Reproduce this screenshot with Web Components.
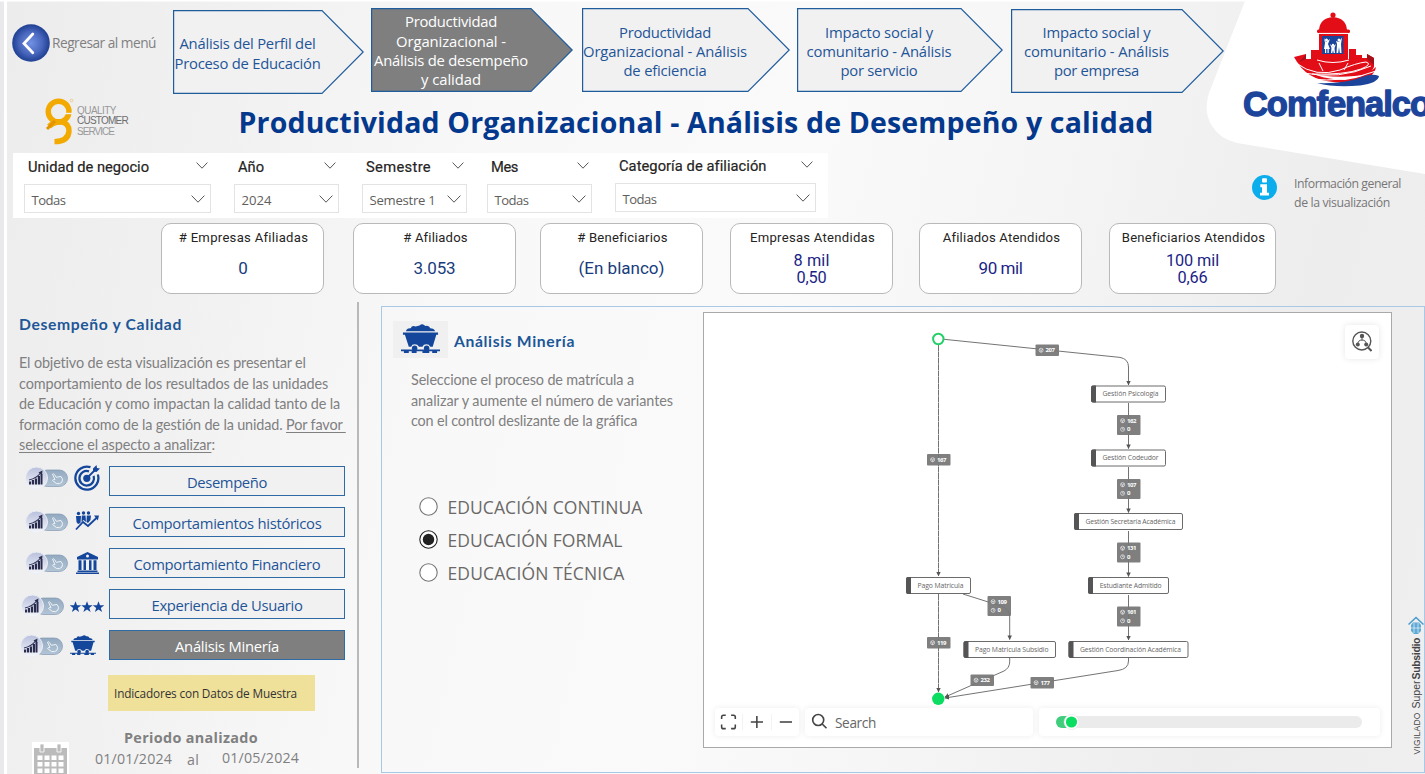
<!DOCTYPE html>
<html lang="es">
<head>
<meta charset="utf-8">
<title>Productividad Organizacional</title>
<style>
html,body{margin:0;padding:0}
body{width:1425px;height:774px;overflow:hidden;font-family:"Open Sans","Noto Sans",sans-serif;color:#777}
</style>
</head>
<body>
<dash-page></dash-page>
<script>
const make = (name, render) => customElements.define(name, class extends HTMLElement {
  connectedCallback() {
    if (this.shadowRoot) return;
    const t = document.createElement('template');
    t.innerHTML = render(k => this.getAttribute(k) || '');
    this.attachShadow({mode: 'open'}).append(t.content.cloneNode(true));
  }
});

const chevron = (w, h) => `<svg width="${w}" height="${h}" viewBox="0 0 ${w} ${h}"><path d="M.6 .6 L${w/2} ${h-.8} L${w-.6} .6" fill="none" stroke="#555" stroke-width="1"/></svg>`;

/* Page frame and backdrop */
make('dash-page', () => `
<style>
:host{display:block;position:relative;width:1425px;height:774px;overflow:hidden;
 background:linear-gradient(103deg,#ececed 0,#f1f1f2 16%,#f8f8f9 32%,#fafafa 52%,#f5f5f5 68%,#ededee 86%,#efeff0 100%)}
.bg{position:absolute;inset:0}
main{position:relative;display:flex;flex-direction:column;height:774px}
.top{display:grid;grid-template-columns:1240px 185px;height:219px}
nav{display:flex;align-items:flex-start;height:96px;padding-left:12px;box-sizing:border-box}
.brand{display:flex;height:57px;padding-left:44px}
h1{margin:6px 0 0 109.500px;font:700 28.500px/40px "Open Sans";color:#04388c}
.kpis{display:flex;height:83px;padding:4px 0 0 161px;box-sizing:border-box}
.body{display:flex;flex:1}
</style>
<svg class="bg" width="1425" height="774">
 <path d="M0 0H4V774H0Z" fill="#e9e9eb"/><path d="M4 0H7V774H4Z" fill="#fff"/><path d="M0 0H1425V1.5H0Z" fill="#fff"/>
 <path d="M1245 1 L1209 93 Q1203 112 1212 126 Q1220 139 1237 143 L1425 174 V0Z" fill="#fff"/>
</svg>
<main>
 <div class="top">
  <div>
   <nav>
    <back-link></back-link>
    <nav-arrow w="191" h="84" top="10" left="1" pad="3"><fit-text w="136">Análisis del Perfil del</fit-text><fit-text w="146">Proceso de Educación</fit-text></nav-arrow>
    <nav-arrow w="202" h="84" top="8" left="7" fill="#7f7f7f" color="#fff" pad="2"><fit-text w="92">Productividad</fit-text><fit-text w="110">Organizacional -</fit-text><fit-text w="154">Análisis de desempeño</fit-text><fit-text w="60">y calidad</fit-text></nav-arrow>
    <nav-arrow w="208" h="84" top="8" left="9" pad="3"><fit-text w="92">Productividad</fit-text><fit-text w="164">Organizacional - Análisis</fit-text><fit-text w="83">de eficiencia</fit-text></nav-arrow>
    <nav-arrow w="206" h="84" top="8" left="7" pad="3"><fit-text w="108">Impacto social y</fit-text><fit-text w="145">comunitario - Análisis</fit-text><fit-text w="77">por servicio</fit-text></nav-arrow>
    <nav-arrow w="213" h="84" top="9" left="8" pad="1"><fit-text w="108">Impacto social y</fit-text><fit-text w="145">comunitario - Análisis</fit-text><fit-text w="85">por empresa</fit-text></nav-arrow>
   </nav>
   <div class="brand"><quality-logo></quality-logo><h1><fit-text w="915">Productividad Organizacional - Análisis de Desempeño y calidad</fit-text></h1></div>
   <slicer-bar></slicer-bar>
  </div>
  <brand-corner></brand-corner>
 </div>
 <div class="kpis">
  <kpi-card name="# Empresas Afiliadas" nw="129" value="0" vw="8.5" w="163" ></kpi-card>
  <kpi-card name="# Afiliados" nw="64" value="3.053" vw="42" w="163" gap="29"></kpi-card>
  <kpi-card name="# Beneficiarios" nw="90" value="(En blanco)" vw="86" w="163" gap="24"></kpi-card>
  <kpi-card name="Empresas Atendidas" nw="125" value="8 mil" vw="36" second="0,50" sw="30" w="163" gap="27"></kpi-card>
  <kpi-card name="Afiliados Atendidos" nw="117" value="90 mil" vw="44" w="163" gap="26" tone="#1c1f85"></kpi-card>
  <kpi-card name="Beneficiarios Atendidos" nw="143" value="100 mil" vw="53" second="0,66" sw="30" w="167" gap="27"></kpi-card>
 </div>
 <div class="body"><side-menu></side-menu><mining-panel></mining-panel></div>
</main>`);

make('back-link', () => `
<style>:host{display:flex;align-items:center;width:160px;height:38px;margin-top:24px;font:13.700px/20px "Open Sans";color:#808080}fit-text{margin-left:2px}svg{flex:none}</style>
<svg width="38" height="38"><defs><radialGradient id="g"><stop offset="0" stop-color="#7191e4"/><stop offset=".6" stop-color="#4867bd"/><stop offset="1" stop-color="#1f3f92"/></radialGradient></defs>
<circle cx="19" cy="19" r="18.8" fill="url(#g)"/><path d="M20.8 10 L12 19.5 L20.8 28.8" fill="none" stroke="#fff" stroke-width="2.8" stroke-linecap="round"/></svg>
<fit-text w="104">Regresar al menú</fit-text>`);

make('nav-arrow', a => {
  const w = +a('w'), h = +a('h');
  return `<style>
:host{display:grid;flex:none;width:${w}px;height:${h}px;margin:${a('top')}px 0 0 ${a('left')}px;color:${a('color') || '#1f5597'};font:14.800px/19.3px "Open Sans"}
svg,div{grid-area:1/1}
div{display:flex;flex-direction:column;justify-content:center;align-items:center;padding:${a('pad')}px 42px 0 0;position:relative}
</style>
<svg width="${w}" height="${h}"><path d="M.6 .6H${w-42}L${w-.8} ${h/2}L${w-42} ${h-.6}H.6Z" fill="${a('fill') || '#f1f1f2'}" stroke="#1f5c9c" stroke-width="1.2"/></svg>
<div><slot></slot></div>`;
});

make('quality-logo', () => `
<style>:host{display:flex;width:85px;height:50px;padding-top:1px;color:#999;font:300 10px/10.300px "Liberation Sans"}
div{padding:9px 0 0 2px}b{display:block;font-weight:400;color:#6d6d6d}svg{flex:none}</style>
<svg width="31" height="50"><g fill="none" stroke="#f2a900" stroke-width="5.4"><circle cx="14.6" cy="14.6" r="10.4"/><path d="M5 29.5 Q10 24.8 17 24.8 Q25 26 25 34 Q24.5 44.3 10.5 44.6"/></g><path d="M3 32 L11 24" stroke="#e39200" stroke-width="3"/><path d="M18 16.5 H29" stroke="#f1f1f2" stroke-width="1.4"/><circle cx="27.5" cy="3.5" r="1.4" fill="none" stroke="#e9b95c" stroke-width=".6"/></svg>
<div><fit-text w="39">QUALITY</fit-text><b><fit-text w="51">CUSTOMER</fit-text></b><fit-text w="37">SERVICE</fit-text></div>`);

make('slicer-bar', () => `
<style>:host{display:flex;width:815px;height:65px;margin-left:13px;padding-left:11px;box-sizing:border-box;background:#fff}
slicer-box{flex:none}</style>
<slicer-box label="Unidad de negocio" lw="121" value="Todas" vw="34" w="187"></slicer-box>
<slicer-box label="Año" lw="26" value="2024" vw="30" w="105" gap="23"></slicer-box>
<slicer-box label="Semestre" lw="65" value="Semestre 1" vw="66" w="105" gap="23"></slicer-box>
<slicer-box label="Mes" lw="27" value="Todas" vw="34" w="105" gap="20"></slicer-box>
<slicer-box label="Categoría de afiliación" lw="147" value="Todas" vw="34" w="201" gap="23" up="1"></slicer-box>`);

make('slicer-box', a => `
<style>:host{display:block;width:${a('w')}px;margin-left:${a('gap') || 0}px;margin-top:${a('up') ? -1 : 0}px}
.t{display:flex;justify-content:space-between;align-items:center;height:31px;padding:0 3px 0 4px;font:400 14.700px/20px Roboto;color:#252423}
.t fit-text{margin-top:-4px;-webkit-text-stroke:.2px #252423}.t svg{margin-top:-6px}
.b{display:flex;justify-content:space-between;align-items:center;height:29px;padding:0 5px 0 6.500px;box-sizing:border-box;border:1px solid #e3e3e3;font:13.100px/20px "Open Sans";color:#605e5c}
.b fit-text{margin-top:2px}
</style>
<div class="t"><fit-text w="${a('lw')}">${a('label')}</fit-text>${chevron(12, 7)}</div>
<div class="b"><fit-text w="${a('vw')}">${a('value')}</fit-text>${chevron(14, 8)}</div>`);

make('brand-corner', () => `
<style>:host{display:flex;flex-direction:column;overflow:hidden}
.l{display:block;margin:10px 0 0 2px}
.i{display:flex;margin:52px 0 0 12px;font:12.3px/19px "Open Sans";color:#777}
.i svg{margin-top:1px;flex:none}.i div{margin:-.500px 0 0 17px}</style>
<svg class="l" width="183" height="112" viewBox="1242 10 183 112">
 <g fill="#e30d18">
  <circle cx="1333" cy="15" r="2.6"/><path d="M1319 30 Q1320 18 1333 17 Q1346 18 1347 30Z"/><rect x="1317" y="29.5" width="33" height="3.4" rx="1.5"/>
  <path d="M1319 33.5H1348V62H1319Z"/>
  <path d="M1294 57 L1306 54 V59 H1311 V50 H1320 V62 L1349 59 V49 H1356 V55 H1362 V58 H1367 V54 L1374 58 V67 L1370 74 Q1335 80 1310 73 Q1299 67 1294 57Z"/>
  <path d="M1298 63 Q1312 79 1345 80 Q1365 78 1376 67 Q1374 79 1355 82 Q1312 86 1298 63Z"/>
 </g>
 <path d="M1306 54V59L1299 62L1303 58Z M1367 54V59L1374 65V58Z" fill="#a3121b"/>
 <g fill="none" stroke="#fff" stroke-width="1"><path d="M1319 33.4H1348"/><path d="M1317 60 Q1333 65 1349 60"/><path d="M1319 63 L1323 71 M1348 63 L1344 70"/><path d="M1296 63 Q1316 78 1340 70 Q1356 63 1366 62 Q1373 64 1361 69 Q1345 75 1312 74"/><path d="M1303 73 Q1340 80 1371 66"/><path d="M1309 79 Q1345 83 1376 71"/></g>
 <path d="M1317 83 Q1345 84 1362 77 Q1372 73 1379 76 Q1378 83 1360 85.5 Q1335 88 1317 83Z" fill="#1c449b"/>
 <rect x="1322" y="36" width="21.5" height="18" fill="#1c449b"/>
 <g fill="#fff"><circle cx="1326.5" cy="40" r="1.5"/><path d="M1324 38 L1326 42 L1330 39 L1328 44 L1330 49 H1324 L1325 43Z"/><path d="M1325 48h1.2v5h-1.2zM1327.5 48h1.2v5h-1.2z"/><circle cx="1333" cy="45" r="1.2"/><path d="M1330 44 L1333 46.5 L1336 44 L1334.5 48 L1335 53 H1333.7 L1333 50 L1332.3 53 H1331 L1331.5 48Z"/><circle cx="1339" cy="40" r="1.5"/><path d="M1336 41 L1339 42 L1342 37.5 L1341 44 L1341.5 53 H1339.8 L1339 47 L1338.2 53 H1336.5 L1337 44Z"/></g>
 <text x="1243" y="116" font-family="Liberation Sans" font-weight="700" font-size="34.500" fill="#1c449b" stroke="#1c449b" stroke-width="1.300" stroke-linejoin="round" textLength="188" lengthAdjust="spacing">Comfenalco</text>
</svg>
<div class="i"><svg width="25" height="25"><circle cx="12.500" cy="12.500" r="12.500" fill="#0cadec"/><rect x="10" y="3.300" width="5" height="4.200" rx="1" fill="#fff"/><path d="M8.300 9.300H15V17.700H17V20.600H8V17.700H10V12.200H8.300Z" fill="#fff"/></svg>
<div><fit-text w="107">Información general</fit-text><fit-text w="96">de la visualización</fit-text></div></div>`);

make('kpi-card', a => `
<style>:host{display:flex;flex:none;flex-direction:column;align-items:center;width:${a('w')}px;height:71px;box-sizing:border-box;margin-left:${a('gap') || 0}px;border:1px solid #b9b9b9;border-radius:10px;background:#fff;padding-top:4px;font:400 13.100px/20px Roboto;color:#252423}
.n{margin-left:2px}
.v{display:flex;flex-direction:column;align-items:center;justify-content:center;height:${a('second') ? 36 : 41}px;margin-top:${a('second') ? 3 : 0}px;font:400 ${a('second') ? 16.3 : 17}px/17px Roboto;color:${a('second') ? '#1c1f85' : a('tone') || '#173c7c'}}</style>
<fit-text class="n" w="${a('nw')}">${a('name')}</fit-text>
<div class="v"><fit-text w="${a('vw')}">${a('value')}</fit-text>${a('second') ? `<fit-text w="${a('sw')}">${a('second')}</fit-text>` : ''}</div>`);

const cart = (w, h) => `<svg width="${w}" height="${h}" viewBox="0 0 40 30" preserveAspectRatio="none"><g fill="#14479b"><path d="M5 7.500 Q6 4 10 4.500 Q11 1 15 2.500 L19 1.500 Q22 -1 25 2 Q29 1 30 4.500 Q34 4.500 35 7.500Z"/><path d="M2 8.700H38V11H36.200L32.500 23.500H30 Q29 21 26 21 Q23 21 22 23.500H18.500 Q17 21 14 21 Q11 21 10.500 23.500H8L4 11H2Z"/><circle cx="14" cy="25" r="2.800"/><circle cx="26.300" cy="25" r="2.800"/><path d="M0 26.500H40V28.300H0ZM3 28H8V30H3ZM11 28H16V30H11ZM22 28H29V30H22ZM32 28H37V30H32Z"/></g></svg>`;
const icons = {
 target: `<svg width="26" height="26" viewBox="0 0 26 26"><g fill="none" stroke="#14479b" stroke-width="2.300"><path d="M16.500 2.200A11.500 11.500 0 1 0 23.800 9.500"/><path d="M15 6.300A7.300 7.300 0 1 0 19.600 10.800"/></g><circle cx="12.800" cy="13.300" r="3.600" fill="#14479b"/><path d="M13 13 L22 4" stroke="#14479b" stroke-width="1.800"/><path d="M19 6.500 V3.500 L22.500 0 L23 3 L26 3.500 L22.500 7Z" fill="#14479b"/></svg>`,
 people: `<svg width="24" height="20" viewBox="0 0 24 20"><g fill="#14479b"><circle cx="3.500" cy="2.500" r="1.700"/><circle cx="8.500" cy="2" r="1.700"/><circle cx="13.500" cy="2" r="1.700"/><path d="M1 5H6L5.500 12L3 13L1.500 11ZM6.800 4.500H10.500L11 11L8.500 9L6.500 11ZM11.800 4.500H16L15.500 9L13 12L11.500 11Z"/><path d="M19 4.500L24 4.500L22.800 9.500Z"/></g><path d="M1 18.500L8 11L13 15L22 6.500" fill="none" stroke="#14479b" stroke-width="1.800"/></svg>`,
 bank: `<svg width="23" height="22" viewBox="0 0 23 22"><path fill="#14479b" fill-rule="evenodd" d="M11.500 0L22 5V7.500H1V5ZM11.500 2.500A1.500 1.500 0 1 0 11.500 5.500A1.500 1.500 0 1 0 11.500 2.500ZM2.500 8.300H5.500V18H2.500ZM7.500 8.300H10V18H7.500ZM13 8.300H15.500V18H13ZM17.500 8.300H20.500V18H17.500ZM1.500 18.500H21.500V20H1.500ZM0 20.500H23V22H0Z"/></svg>`,
 stars: `<svg width="34" height="12" viewBox="0 0 34 12"><g fill="#14479b">${[5.5,17,28.500].map(x=>`<path transform="translate(${x} 6.200)" d="M0-6L1.500-1.900L5.700-1.900L2.300.7L3.600 4.800L0 2.300L-3.600 4.800L-2.300.7L-5.700-1.900L-1.500-1.900Z"/>`).join('')}</g></svg>`,
 cart: cart(26, 20)
};

make('toggle-badge', () => `
<style>:host{display:block;width:44px;height:24px}</style>
<svg width="44" height="24" viewBox="0 0 44 24"><defs><linearGradient id="p" x1="0" y1="0" x2="0" y2="1"><stop offset="0" stop-color="#92a9c0"/><stop offset="1" stop-color="#b3c5d6"/></linearGradient><linearGradient id="c" x1="0" y1="0" x2="0" y2="1"><stop offset="0" stop-color="#b8c0dc"/><stop offset="1" stop-color="#f6f7fb"/></linearGradient></defs>
<rect x="14" y="4" width="28.500" height="16.500" rx="8.200" fill="url(#p)" stroke="#8298b2" stroke-width=".7"/>
<circle cx="11.500" cy="12" r="11" fill="url(#c)" stroke="#eceef5" stroke-width="1"/>
<path d="M4 15.500h2v3H4zM6.800 14h2.200v4.500H6.800zM9.800 12.500H12v6H9.800zM12.800 10H15v8.500h-2.200zM15.500 8h2v10.500h-2z" fill="#292c4c"/><path d="M4 14Q12 12 15.500 7" fill="none" stroke="#33375b" stroke-width="1.100"/><path d="M13.500 6.500L17.500 4.500L17 9Z" fill="#292c4c"/>
<path d="M27.500 8.200Q28.500 7.200 29.500 8.500L31.200 11.300L36 10.500Q38.500 13 37 16Q35 18.500 31.500 17.500L27.500 14.500Q28 13 30 13.700Z" fill="none" stroke="#eef3f8" stroke-width="1"/></svg>`);

make('menu-row', a => `
<style>:host{display:grid;grid-template-columns:94px 236px;height:30px}
.i{display:grid;grid-template-columns:50px 36px;align-items:center;transform:translateY(${a('dy') || 0}px)}
toggle-badge{margin-left:${a('dx') || 0}px}
.i svg{display:block;margin:0 auto;transform:translate(${a('ix') || 0}px,${a('iy') || 0}px)}
button{all:unset;display:flex;justify-content:center;align-items:center;height:30px;box-sizing:border-box;padding-top:3px;border:1.500px solid #2d6aa6;background:${a('on') ? '#7f7f7f' : '#f1f1f2'};color:${a('on') ? '#fff' : '#1f5597'};font:14.800px/20px "Open Sans"}</style>
<div class="i"><toggle-badge></toggle-badge>${icons[a('icon')]}</div>
<button><fit-text w="${a('tw')}">${a('label')}</fit-text></button>`);

make('side-menu', () => `
<style>:host{display:flex;flex-direction:column;width:356.500px;height:466px;border-right:2.500px solid #b9b9b9;box-sizing:content-box}
h2{margin:10px 0 0 19px;font:700 15.700px/24px Lato;color:#1c5797}
p{margin:17px 0 0 19px;font:14.400px/20.500px Lato;color:#808080}
p u{text-decoration-thickness:1px;text-underline-offset:2px}
.m{display:grid;gap:11px;margin:10px 0 0 15px}
.y{margin:15px 0 0 108px;width:207px;height:37px;box-sizing:border-box;padding:8px 6px;background:#efe09a;font:11.800px/20px "Open Sans";color:#333}
.d{display:flex;margin:16px 0 0 32px;height:45px}
.cal{margin-top:15px;width:37px;height:32px;background:#fff;flex:none}
.t{margin-left:26px;font:14.200px/20px "Open Sans";color:#808080}
.t b{display:block;margin-left:29px;font:700 14.400px/22px "Open Sans"}
.t div{display:flex;align-items:flex-start}</style>
<h2><fit-text w="163">Desempeño y Calidad</fit-text></h2>
<p><fit-text w="287">El objetivo de esta visualización es presentar el</fit-text><fit-text w="309">comportamiento de los resultados de las unidades</fit-text><fit-text w="321">de Educación y como impactan la calidad tanto de la</fit-text><fit-text w="327">formación como de la gestión de la unidad. <u>Por favor&nbsp;</u></fit-text><fit-text w="196"><u>seleccione el aspecto a analizar</u>:</fit-text></p>
<div class="m">
 <menu-row icon="target" label="Desempeño" tw="80" dy="-3" dx="10" ix="4"></menu-row>
 <menu-row icon="people" label="Comportamientos históricos" tw="189" dx="10" ix="4" iy="-1"></menu-row>
 <menu-row icon="bank" label="Comportamiento Financiero" tw="187" dx="10" ix="4"></menu-row>
 <menu-row icon="stars" label="Experiencia de Usuario" tw="151" dy="2" dx="6" ix="4" iy="1"></menu-row>
 <menu-row icon="cart" label="Análisis Minería" tw="104" dy="1" dx="5" iy="-1" on="1"></menu-row>
</div>
<div class="y"><fit-text w="183">Indicadores con Datos de Muestra</fit-text></div>
<div class="d"><svg class="cal" width="37" height="32"><path d="M2 6H35V34H2Z" fill="#bbb"/><path d="M8 2h4v8H8zM25 2h4v8h-4z" fill="#bbb" stroke="#fff" stroke-width=".8"/><g fill="#fff">${[0,1,2].map(r=>[0,1,2,3].map(c=>`<rect x="${5.500+c*7}" y="${13.500+r*6.500}" width="5" height="4.500"/>`).join('')).join('')}</g></svg>
<div class="t"><b><fit-text w="134">Periodo analizado</fit-text></b><div><fit-text w="77">01/01/2024</fit-text><fit-text w="12" style="margin:1px 0 0 15px">al</fit-text><fit-text w="77" style="margin:-.500px 0 0 23px">01/05/2024</fit-text></div></div></div>`);

make('radio-item', a => `
<style>:host{display:flex;align-items:center;height:33px;font:17.500px/24px "Open Sans";color:#6b6967}svg{flex:none;margin-right:9.500px}</style>
<svg width="19" height="19"><circle cx="9.500" cy="9.500" r="8.700" fill="#fff" stroke="${a('on') ? '#222' : '#777'}" stroke-width="1.100"/>${a('on') ? '<circle cx="9.500" cy="9.500" r="5.700" fill="#222"/>' : ''}</svg><fit-text w="${a('tw')}">${a('label')}</fit-text>`);

make('mining-panel', () => `
<style>:host{display:flex;margin:3.500px 0 0 22px;width:1044px;height:467px;box-sizing:border-box;border:1.500px solid #a8c9e6;flex:none}
.l{width:320.500px;flex:none;padding-left:1px}
.h{display:flex;align-items:center;margin:14px 0 0 10.500px;height:37px}
.c{display:grid;place-items:center;width:55px;height:37px;background:#f0f0f1}
.c svg{margin-top:-2px}
h2{margin:4px 0 0 6px;font:700 15.700px/24px Lato;color:#1c5797}
p{margin:12.500px 0 0 28.500px;font:14.400px/20.500px Lato;color:#808080}
.r{margin:58.500px 0 0 36.500px}
mining-graph{margin-top:5px}</style>
<div class="l"><div class="h"><div class="c">${cart(39, 29)}</div><h2><fit-text w="121">Análisis Minería</fit-text></h2></div>
<p><fit-text w="223">Seleccione el proceso de matrícula a</fit-text><fit-text w="262">analizar y aumente el número de variantes</fit-text><fit-text w="226">con el control deslizante de la gráfica</fit-text></p>
<div class="r"><radio-item label="EDUCACIÓN CONTINUA" tw="195"></radio-item><radio-item on="1" label="EDUCACIÓN FORMAL" tw="175"></radio-item><radio-item label="EDUCACIÓN TÉCNICA" tw="177"></radio-item></div></div>
<mining-graph></mining-graph><super-mark></super-mark>`);

make('super-mark', () => `
<style>:host{display:block;margin:309px 0 0 14px;width:18px}
svg{display:block;margin-left:2px}</style>
<svg width="17" height="140" viewBox="1408 616 17 140"><g fill="none" stroke="#4a9bce" stroke-width="1.500"><path d="M1408.500 624.500L1416 617.500L1423.500 624.500"/></g><path d="M1411 625L1413 622.500H1419L1421 625V631L1418 634H1414L1411 631Z" fill="#5fa9d7"/><path d="M1414 623V633M1418 623V633M1411 628H1421" stroke="#e9f2f8" stroke-width=".7"/>
<g transform="translate(1419.500 754.500) rotate(-90)" font-family="Liberation Sans" fill="#444"><text font-size="8.500" textLength="42" x="0">VIGILADO</text><text font-size="10.500" x="46" textLength="28">Super</text><text font-size="10.500" font-weight="700" x="75" textLength="42">Subsidio</text></g></svg>`);

const node = (x, y, w, tx, tw, s) => `<rect x="${x+.500}" y="${y+.500}" width="${w-1}" height="16" rx="1.500" fill="#fff" stroke="#5a5a5a" stroke-width=".9"/><path d="M${x+5} ${y}V${y+17}H${x+2}Q${x} ${y+17} ${x} ${y+15}V${y+2}Q${x} ${y} ${x+2} ${y}Z" fill="#555"/><text x="${tx}" y="${y+10.700}" font-size="6.800" fill="#666" textLength="${tw}">${s}</text>`;
const tag = (x, y, n, two) => `<rect x="${x}" y="${y}" width="23.500" height="${two ? 20 : 11.500}" rx="1" fill="#777" fill-opacity=".94"/><g fill="none" stroke="#eee" stroke-width=".7"><circle cx="${x+5.600}" cy="${y+5.700}" r="2"/><path d="M${x+3.800} ${y+4.800}l1.800 1l1.800-1M${x+5.600} ${y+5.800}v2"/>${two ? `<circle cx="${x+5.600}" cy="${y+14.300}" r="2"/><path d="M${x+5.600} ${y+13}v1.300h1.200"/>` : ''}</g><text x="${x+10}" y="${y+7.800}" font-size="6" font-weight="700" fill="#fff" textLength="9.500">${n}</text>${two ? `<text x="${x+10}" y="${y+16.400}" font-size="6" font-weight="700" fill="#fff">0</text>` : ''}`;

make('mining-graph', () => `
<style>:host{display:grid;grid-template-rows:389px 1fr;width:689px;height:436px;box-sizing:border-box;border:1px solid #a9a9a9;background:#fff;flex:none;position:relative}
.g{display:block;grid-area:1/1/3/2}
.bar{grid-area:2/1;display:flex;position:relative;height:28px;margin:6px 0 0 11px}
.bar>div{display:flex;align-items:center;background:#fff;border-radius:4px;box-shadow:0 0 6px rgba(0,0,0,.08)}
.z{width:84px}.z svg{flex:1}.z svg+svg{border-left:1px solid #f3f3f3}
.s{width:228px;margin-left:6px;font:13.600px/20px "Open Sans";color:#666}.s svg{margin:0 7px 0 6px}.s fit-text{margin:2px 0 0 0}
.k{width:341px;margin-left:6px}.k svg{margin-left:15px}
.find{position:absolute;right:12px;top:12px;width:34px;height:34px;border-radius:4px;background:#fff;box-shadow:0 0 6px rgba(0,0,0,.1);display:grid;place-items:center}
text{font-family:"Open Sans"}</style>
<svg class="g" width="687" height="434" viewBox="704 313 687 434">
<defs><marker id="a" viewBox="0 0 6 6" refX="5.500" refY="3" markerWidth="4.500" markerHeight="4.500" orient="auto" markerUnits="userSpaceOnUse"><path d="M0 0L6 3L0 6Z" fill="#555"/></marker></defs>
<g fill="none" stroke="#6c6c6c" stroke-width=".95" marker-end="url(#a)">
<path d="M938.500 345V576" stroke-dasharray="6 .4"/><path d="M938.500 594V692" stroke-dasharray="6 .4"/>
<path d="M944 339.300L1120 357.400Q1128.500 359 1128.500 367V385"/>
<path d="M1128.500 403V448.500"/><path d="M1128.500 467V512.500"/><path d="M1128.500 531V576.500"/><path d="M1128.500 595V640"/>
<path d="M963 594L1001 606Q1009.700 609 1009.700 617V639.500"/>
<path d="M1009.700 658V662Q1009.500 668 1004 671L945 697"/><path d="M1128.500 658V661Q1128.500 669 1118 670.500L945 698"/></g>
<circle cx="938.300" cy="339" r="5.200" fill="#fff" stroke="#24d169" stroke-width="2"/><circle cx="938.300" cy="698.800" r="6.200" fill="#0bdd62"/>
${node(1091,385.500,75,1102.500,56,'Gestión Psicología')}${node(1091,449.500,75,1102.500,56,'Gestión Codeudor')}${node(1074,513,109,1085.500,90,'Gestión Secretaría Académica')}${node(1088,577,81,1099.700,62,'Estudiante Admitido')}${node(1068.500,641,120,1080,101,'Gestión Coordinación Académica')}${node(906,577,65,917.500,46,'Pago Matricula')}${node(963.500,641,92.500,975,73.500,'Pago Matricula Subsidio')}
${tag(1035.500,344.500,207)}${tag(1117,415,162,1)}${tag(1117,479,107,1)}${tag(1117,542.500,131,1)}${tag(1117,606.500,161,1)}${tag(927,454,167)}${tag(927,637,119)}${tag(987.500,596,109,1)}${tag(970.500,674.500,232)}${tag(1030.500,677,177)}
</svg>
<div class="bar"><div class="z"><svg height="16" viewBox="0 0 28 16"><path d="M6.800 5V2.800Q6.800 1 8.600 1H11M16.500 1H19Q20.800 1 20.800 2.800V5M20.800 10.500V13Q20.800 14.800 19 14.800H16.500M11 14.800H8.600Q6.800 14.800 6.800 13V10.500" fill="none" stroke="#444" stroke-width="1.600"/></svg><svg height="16" viewBox="0 0 28 16"><path d="M8 8H20.500M14.200 1.800V14.200" stroke="#444" stroke-width="1.600"/></svg><svg height="16" viewBox="0 0 28 16"><path d="M8 8H20.500" stroke="#444" stroke-width="1.600"/></svg></div>
<div class="s"><svg width="17" height="17"><circle cx="7.200" cy="7" r="5.500" fill="none" stroke="#444" stroke-width="1.600"/><path d="M11.200 11L15.500 15.300" stroke="#444" stroke-width="1.600"/></svg><fit-text w="41">Search</fit-text></div>
<div class="k"><svg width="312" height="20"><rect x="2" y="4" width="306" height="12" rx="6" fill="#ebebeb"/><rect x="2" y="4" width="16" height="12" rx="6" fill="#3fcf7c"/><circle cx="17.500" cy="10" r="7.500" fill="#fff" stroke="#ddd" stroke-width=".5"/><circle cx="17.500" cy="10" r="5.600" fill="#0bdd62"/></svg></div></div>
<div class="find"><svg width="20" height="21" viewBox="0 0 20 21"><g fill="none" stroke="#555" stroke-width="1.400"><circle cx="9.800" cy="10" r="9"/><path d="M10 5V9.500M5.800 13.500Q5.800 9 10 9Q14.200 9 14.200 13.500" stroke-width="1"/></g><path d="M15.500 16L19.500 20" stroke="#555" stroke-width="2"/><g fill="#555"><circle cx="10" cy="5" r="2.200"/><circle cx="5.800" cy="13.500" r="2"/><circle cx="14.200" cy="13.500" r="2"/></g></svg></div>`);

/* One line of text tracked to a given width */
customElements.define('fit-text', class extends HTMLElement {
  connectedCallback() {
    if (this.shadowRoot) return;
    this.attachShadow({mode: 'open'}).innerHTML = '<style>:host{display:block;width:max-content;white-space:nowrap;flex:none}</style><slot></slot>';
    const w = +this.getAttribute('w');
    const now = this.getBoundingClientRect().width;
    this.style.letterSpacing = ((w - now) / this.textContent.length).toFixed(3) + 'px';
  }
});
</script>
</body>
</html>
